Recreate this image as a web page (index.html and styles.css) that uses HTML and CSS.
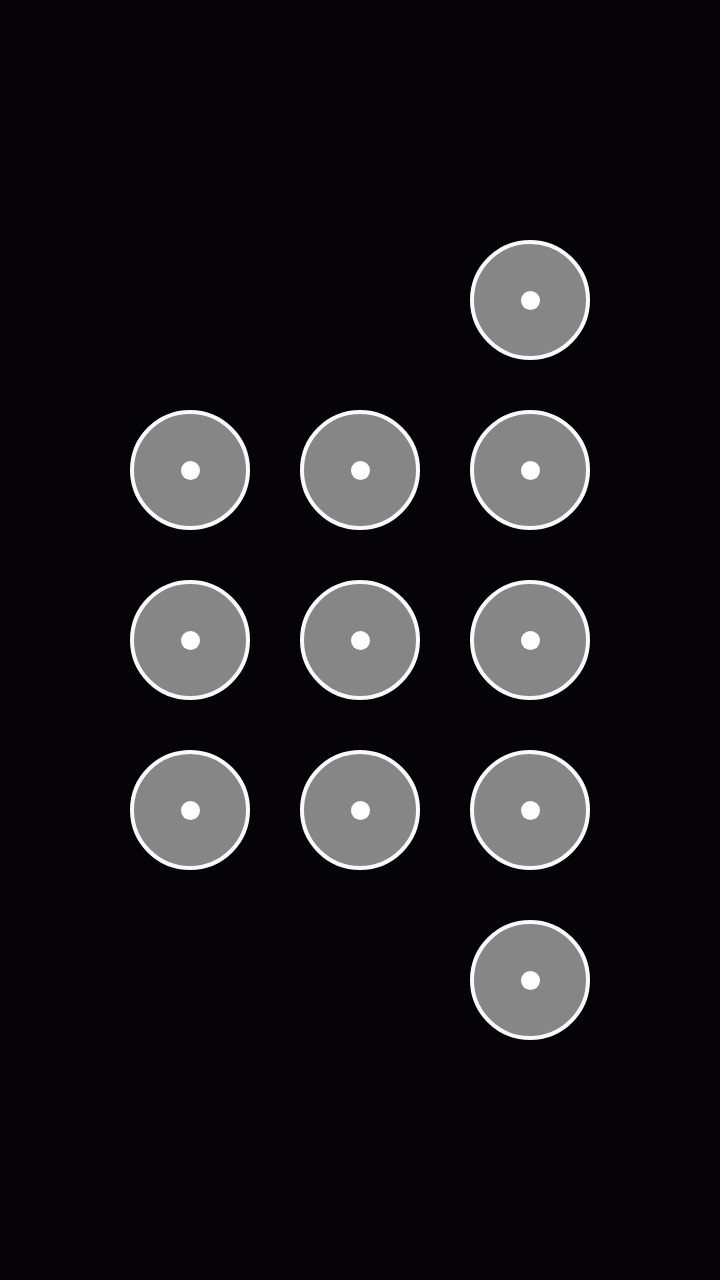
FILE: index.html
```html
<!DOCTYPE html>
<html lang="en">
<head>
  <meta charset="UTF-8" />
  <title>Pattern</title>
  <link rel="stylesheet" href="styles.css">
</head>
<body>
  <div class="pad">
    <span class="cell"></span>
    <span class="cell"></span>
    <span class="cell"><span class="dot"></span></span>

    <span class="cell"><span class="dot"></span></span>
    <span class="cell"><span class="dot"></span></span>
    <span class="cell"><span class="dot"></span></span>

    <span class="cell"><span class="dot"></span></span>
    <span class="cell"><span class="dot"></span></span>
    <span class="cell"><span class="dot"></span></span>

    <span class="cell"><span class="dot"></span></span>
    <span class="cell"><span class="dot"></span></span>
    <span class="cell"><span class="dot"></span></span>

    <span class="cell"></span>
    <span class="cell"></span>
    <span class="cell"><span class="dot"></span></span>
  </div>
</body>
</html>
```

FILE: styles.css
```css
html, body {
  margin: 0;
  height: 100%;
}
body {
  background: #050307;
  font-family: "Liberation Sans", sans-serif;
}
.pad {
  display: grid;
  grid-template-columns: repeat(3, 170px);
  grid-auto-rows: 170px;
  justify-content: center;
  padding-top: 215px;
}
.cell {
  display: flex;
  align-items: center;
  justify-content: center;
}
.dot {
  width: 120px;
  height: 120px;
  box-sizing: border-box;
  border: 4px solid #fafafa;
  border-radius: 50%;
  background: #878686;
  display: flex;
  align-items: center;
  justify-content: center;
}
.dot::after {
  content: "";
  width: 19px;
  height: 19px;
  border-radius: 50%;
  background: #fff;
}
```
